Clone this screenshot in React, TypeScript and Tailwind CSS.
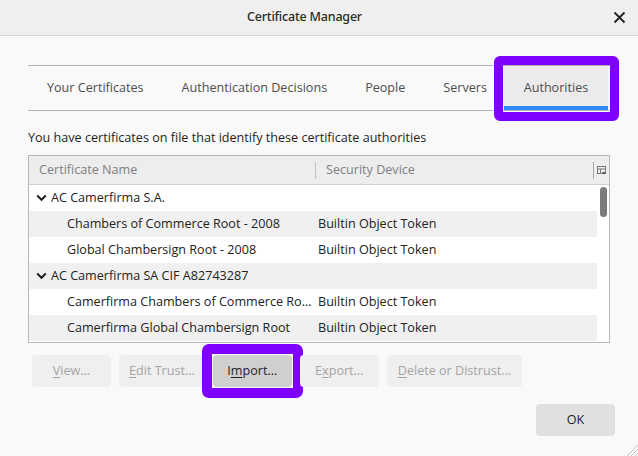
import React from "react";

const rows: { name: string; device: string; parent?: boolean }[] = [
  { name: "AC Camerfirma S.A.", device: "", parent: true },
  { name: "Chambers of Commerce Root - 2008", device: "Builtin Object Token" },
  { name: "Global Chambersign Root - 2008", device: "Builtin Object Token" },
  { name: "AC Camerfirma SA CIF A82743287", device: "", parent: true },
  { name: "Camerfirma Chambers of Commerce Ro…", device: "Builtin Object Token" },
  { name: "Camerfirma Global Chambersign Root", device: "Builtin Object Token" },
];

function Chevron() {
  return (
    <svg width="11" height="8" viewBox="0 0 11 8" className="shrink-0">
      <path d="M1.2 1.5 L5.5 5.8 L9.8 1.5" fill="none" stroke="#222" strokeWidth="2" />
    </svg>
  );
}

function Btn({
  k,
  rest,
  pre = "",
  active = false,
  outlined = false,
  tight = false,
}: {
  pre?: string;
  k: string;
  rest: string;
  active?: boolean;
  outlined?: boolean;
  tight?: boolean;
}) {
  return (
    <div
      className={
        "relative h-[32px] min-w-[79px] rounded-[4px] flex items-center justify-center text-[12.6px] " +
        (tight ? "px-[10px] " : "px-[11px] ") +
        (active ? "bg-[#cfcfcf] text-[#1f1f1f]" : "bg-[#efefef] text-[#a4a4a4]")
      }
    >
      <span>
        {pre}
        <span className="underline underline-offset-[2px]">{k}</span>
        {rest}
      </span>
      {outlined && (
        <div className="absolute -inset-[11px] border-[10px] border-[#7f00ff] rounded-[7px] pointer-events-none" />
      )}
    </div>
  );
}

export default function App() {
  return (
    <div
      className="relative w-[638px] h-[456px] bg-[#f9f9f9] overflow-hidden text-[#1f1f1f]"
      style={{ fontFamily: '"Open Sans", "Noto Sans", sans-serif' }}
    >
      {/* Title bar */}
      <div className="relative h-[36px] bg-[#efefef] border-b border-[#d6d6d6] flex items-center justify-center pr-[29px]">
        <span className="text-[12.5px] font-medium text-[#2a2a2a] tracking-[-0.2px]" style={{ fontFamily: '"Noto Sans", sans-serif' }}>
          Certificate Manager
        </span>
        <div className="absolute right-[12px] top-[11px]">
          <svg width="13" height="13" viewBox="0 0 13 13">
            <path d="M1.5 1.5 L11.5 11.5 M11.5 1.5 L1.5 11.5" stroke="#222" strokeWidth="1.8" />
          </svg>
        </div>
      </div>

      <div className="px-[28px]">
        {/* Tabs */}
        <div className="mt-[29px] h-[46px] border-t border-b border-[#b4b4b4] flex text-[12.6px] text-[#4d4d4d]">
          <div className="px-[19px] flex items-center pt-[1px]">Your Certificates</div>
          <div className="px-[19px] flex items-center pt-[1px]">Authentication Decisions</div>
          <div className="px-[19px] flex items-center pt-[1px]">People</div>
          <div className="pl-[19px] pr-[17px] flex items-center pt-[1px]">Servers</div>
          <div className="relative flex-1 flex items-center justify-center bg-[#ebebee] mr-[2px]">
            <span>Authorities</span>
            <div className="absolute left-0 right-0 bottom-0 h-[4px] bg-[#2f8af5]" />
            <div className="absolute -left-[10px] -right-[11px] -top-[10px] -bottom-[11px] border-[9px] border-[#7f00ff] rounded-[6px]" />
          </div>
        </div>

        {/* Intro */}
        <div className="mt-[18px] leading-[18px] text-[12.6px] text-[#1f1f1f]">
          You have certificates on file that identify these certificate authorities
        </div>

        {/* Table */}
        <div className="mt-[8px] w-[582px] h-[188px] border border-[#b8b8b8] bg-white flex flex-col">
          <div className="h-[29px] shrink-0 bg-[#ededed] border-b border-[#d0d0d0] flex items-center text-[12.6px] text-[#808080] pt-[1px]">
            <div className="w-[287px] pl-[10px] border-r border-[#c2c2c2] h-[17px] flex items-center">Certificate Name</div>
            <div className="flex-1 pl-[10px]">Security Device</div>
            <div className="w-[15px] h-[17px] border-l border-[#a8a8a8] flex items-center justify-center mr-[1px]">
              <svg width="9" height="9" viewBox="0 0 9 9">
                <rect x="0.5" y="0.5" width="8" height="7" fill="none" stroke="#777" strokeWidth="1" />
                <path d="M0.5 3 H8.5 M3.5 3 V7.5" stroke="#777" strokeWidth="1" />
                <path d="M5 6 L8.5 6 L6.75 8.5 Z" fill="#555" />
              </svg>
            </div>
          </div>
          <div className="flex flex-1">
            <div className="w-[568px] flex flex-col">
              {rows.map((r, i) => (
                <div
                  key={i}
                  className={
                    "h-[26px] flex items-center text-[12.6px] text-[#222] pt-[1px] " + (i % 2 === 1 ? "bg-[#f0f0f0]" : "bg-white")
                  }
                >
                  {r.parent ? (
                    <div className="w-[287px] pl-[7px] flex items-center gap-[4px] whitespace-nowrap">
                      <Chevron />
                      <span>{r.name}</span>
                    </div>
                  ) : (
                    <div className="w-[287px] pl-[38px] whitespace-nowrap">{r.name}</div>
                  )}
                  <div className="flex-1 pl-[2px] whitespace-nowrap">{r.device}</div>
                </div>
              ))}
            </div>
            <div className="flex-1 flex justify-center pt-[2px]">
              <div className="w-[7px] h-[30px] rounded-full bg-[#7b7b7b]" />
            </div>
          </div>
        </div>

        {/* Buttons */}
        <div className="mt-[12px] pl-[4px] flex gap-[8px]">
          <Btn k="V" rest="iew…" />
          <Btn k="E" rest="dit Trust…" tight />
          <Btn pre="I" k="m" rest="port…" active outlined />
          <Btn pre="E" k="x" rest="port…" />
          <Btn k="D" rest="elete or Distrust…" />
        </div>
      </div>

      {/* OK */}
      <div className="mt-[17px] flex justify-end pr-[23px]">
        <div className="w-[79px] h-[32px] rounded-[4px] bg-[#e0e0e0] flex items-center justify-center text-[12.6px] text-[#1f1f1f]">
          OK
        </div>
      </div>

      {/* resize grip */}
      <div className="absolute right-0 bottom-0">
        <svg width="14" height="14" viewBox="0 0 14 14">
          <path d="M14 3 L3 14 M14 7 L7 14 M14 11 L11 14" stroke="#c4c4c4" strokeWidth="1" />
        </svg>
      </div>
    </div>
  );
}
